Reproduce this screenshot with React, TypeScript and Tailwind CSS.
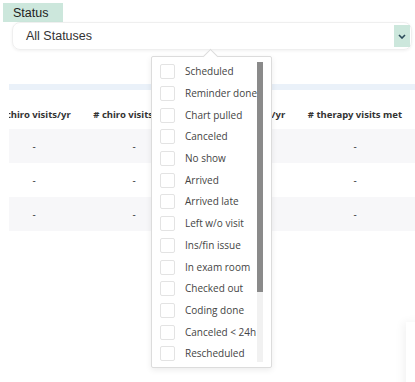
import React from "react"

const statuses = [
  "Scheduled",
  "Reminder done",
  "Chart pulled",
  "Canceled",
  "No show",
  "Arrived",
  "Arrived late",
  "Left w/o visit",
  "Ins/fin issue",
  "In exam room",
  "Checked out",
  "Coding done",
  "Canceled < 24h",
  "Rescheduled",
]

const columns = [
  { label: "# chiro visits/yr", w: "w-[100px]" },
  { label: "# chiro visits met", w: "w-[100px]" },
  { label: "# therapy visits/yr", w: "w-[116px]" },
  { label: "# therapy visits met", w: "w-[110px]" },
]

const rows = [0, 1, 2]

export default function App() {
  return (
    <div className="relative w-[415px] h-[382px] overflow-hidden bg-white font-['Liberation_Sans',Arial,sans-serif]">
      <div className="pt-[3px]">
        <div className="ml-[3px] w-[60px] h-[19px] bg-[#cce7dc] pl-[10px] text-[12.5px] leading-[20px] text-[#222]">
          Status
        </div>
        <div className="ml-[12px] w-[400px] h-[28px] rounded-[8px] border border-[#efefef] shadow-[0_1px_3px_rgba(0,0,0,0.06)] flex items-center justify-between pl-[13px] pr-[1px]">
          <span className="text-[12.5px] text-[#333]">All Statuses</span>
          <div className="w-[16px] h-[22px] bg-[#cce7dc] flex items-center justify-center">
            <svg width="8" height="5" viewBox="0 0 8 5" fill="none">
              <path d="M1 1l3 3 3-3" stroke="#2c4a5a" strokeWidth="1.6" />
            </svg>
          </div>
        </div>
      </div>

      <div className="ml-[9px] mt-[34px] overflow-hidden">
        <div className="h-[6px] bg-[#eaf1f9]" />
        <div className="-ml-[25px] font-['Noto_Sans',sans-serif]">
          <div className="flex h-[39px] items-end pb-[7px]">
            {columns.map((c) => (
              <div key={c.label} className={`${c.w} shrink-0 text-center text-[9.5px] font-bold text-[#333] whitespace-nowrap`}>
                {c.label}
              </div>
            ))}
          </div>
          {rows.map((r) => (
            <div key={r} className={`flex h-[34px] items-center ${r % 2 === 0 ? "bg-[#f7f7f9]" : "bg-white"}`}>
              {columns.map((c) => (
                <div key={c.label} className={`${c.w} shrink-0 text-center text-[10px] text-[#444]`}>
                  -
                </div>
              ))}
            </div>
          ))}
        </div>
      </div>

      {/* status multi-select dropdown */}
      <div className="absolute left-[151px] top-[56px] w-[121px] h-[312px] bg-white border border-[#dcdcdc] rounded-[2px] shadow-[0_2px_6px_rgba(0,0,0,0.08)]">
        <div className="absolute -top-[6px] left-[53px] w-[11px] h-[11px] rotate-45 bg-white border-l border-t border-[#dcdcdc]" />
        <div className="relative flex h-full">
          <div className="flex-1 pt-[4px] pl-[8px] font-['Open_Sans',sans-serif]">
            {statuses.map((s) => (
              <div key={s} className="flex h-[21.7px] items-center gap-[10px]">
                <span className="w-[15px] h-[15px] shrink-0 border border-[#e3e3e3] rounded-[2px] bg-white" />
                <span className="text-[10px] text-[#444] whitespace-nowrap">{s}</span>
              </div>
            ))}
          </div>
          <div className="absolute left-[105px] top-[5px] w-[6px] h-[300px] bg-[#f1f1f1]">
            <div className="h-[230px] bg-[#8a8a8a]" />
          </div>
        </div>
      </div>

      <div className="absolute left-[406px] top-[322px] w-[20px] h-[70px] bg-white shadow-[-3px_0_10px_rgba(0,0,0,0.05)]" />
    </div>
  )
}
